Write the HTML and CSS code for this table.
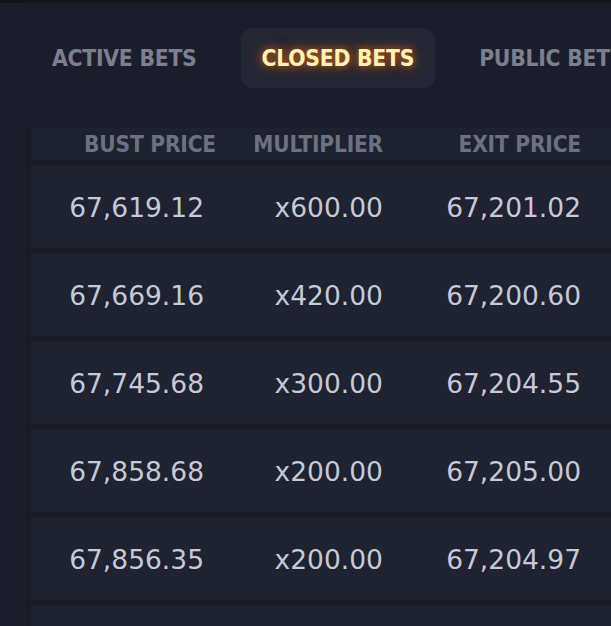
FILE: index.html
```html
<!DOCTYPE html>
<html lang="en">
<head>
  <meta charset="UTF-8" />
  <meta name="viewport" content="width=device-width, initial-scale=1.0" />
  <title>Bets</title>
  <link rel="stylesheet" href="styles.css">
</head>
<body>
  <div class="layout">
    <aside class="rail"></aside>
    <main class="content">
      <nav class="tabs">
        <a class="tab">ACTIVE BETS</a>
        <a class="tab active">CLOSED BETS</a>
        <a class="tab">PUBLIC BETS</a>
      </nav>

      <div class="bets">
        <div class="row head">
          <span>BUST PRICE</span><span>MULTIPLIER</span><span>EXIT PRICE</span><span></span>
        </div>
        <div class="row">
          <span class="bust">67,619.12</span><span>x600.00</span><span>67,201.02</span><span></span>
        </div>
        <div class="row">
          <span class="bust">67,669.16</span><span>x420.00</span><span>67,200.60</span><span></span>
        </div>
        <div class="row">
          <span class="bust">67,745.68</span><span>x300.00</span><span>67,204.55</span><span></span>
        </div>
        <div class="row">
          <span class="bust">67,858.68</span><span>x200.00</span><span>67,205.00</span><span></span>
        </div>
        <div class="row">
          <span class="bust">67,856.35</span><span>x200.00</span><span>67,204.97</span><span></span>
        </div>
        <div class="row">
          <span class="bust"></span><span></span><span></span><span></span>
        </div>
      </div>
    </main>
  </div>
</body>
</html>
```

FILE: styles.css
```css
:root{
  --bg:#1b1e2a;
  --rail:#1c1f2b;
  --row:#1f2230;
  --gap:#191b25;
  --muted:#6c7081;
  --value:#c6c9d6;
}
*{box-sizing:border-box}
html,body{margin:0;height:100%;overflow:hidden}
body{
  background:var(--bg);
  border-top:3px solid #14161e;
  font-family:"DejaVu Sans",Arial,sans-serif;
}
.layout{display:flex;min-height:100%}
.rail{width:26px;flex:none;background:var(--rail)}
.content{flex:1;padding-left:5px;background:var(--gap)}

.tabs{
  display:flex;gap:23px;
  padding-top:25px;
  background:var(--bg);
  margin-left:-5px;padding-left:5px;
  padding-bottom:39px;
}
.tab{
  height:60px;padding:0 21px;
  display:flex;align-items:center;
  font-family:"DejaVu Sans Condensed","DejaVu Sans",sans-serif;
  font-stretch:condensed;
  font-weight:700;font-size:22.7px;letter-spacing:-.25px;
  color:#7b7f90;white-space:nowrap;
  border-radius:12px;
}
.tab.active{
  background:#242734;
  color:#fdf1b4;
  text-shadow:0 0 8px rgba(255,120,20,.75),0 0 16px rgba(230,90,10,.45);
}

.bets{
  width:640px;
  display:flex;flex-direction:column;gap:6px;
  background:var(--gap);
}
.row{
  display:grid;
  grid-template-columns:185px 167px 198px 1fr;
  align-items:center;
  height:82px;
  background:var(--row);
  color:var(--value);
  font-size:26.5px;
  text-align:right;
}
.row .bust{padding-right:12px}
.row.head{
  height:33px;
  background:#1e2130;
  color:var(--muted);
  font-family:"DejaVu Sans Condensed","DejaVu Sans",sans-serif;
  font-stretch:condensed;
  font-weight:700;font-size:22.5px;letter-spacing:-.2px;
}
```
